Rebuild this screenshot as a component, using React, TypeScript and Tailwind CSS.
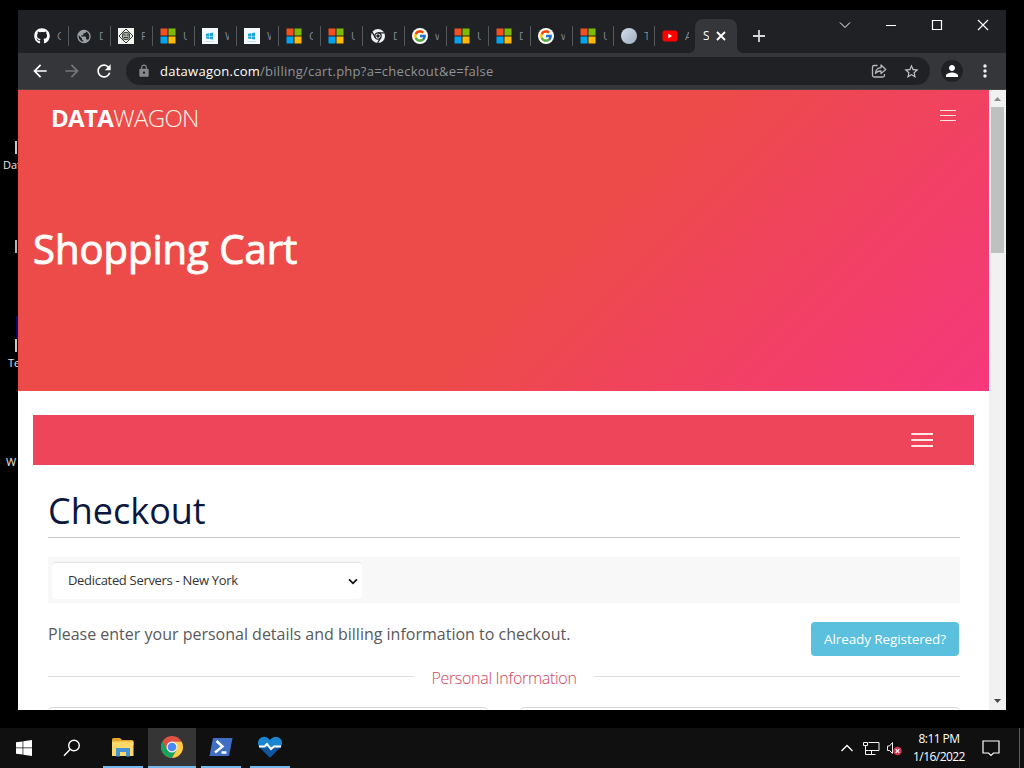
import type { ReactNode } from "react";
import { FaGithub } from "react-icons/fa";
import { FcGoogle } from "react-icons/fc";
import {
  MdArrowBack,
  MdArrowForward,
  MdLock,
  MdMoreVert,
  MdPerson,
  MdPublic,
  MdRefresh,
  MdStarBorder,
} from "react-icons/md";

function MicrosoftIcon() {
  return (
    <svg width="16" height="16" viewBox="0 0 16 16">
      <path fill="#f25022" d="M.5.5h7v7h-7z" />
      <path fill="#7fba00" d="M8.5.5h7v7h-7z" />
      <path fill="#00a4ef" d="M.5 8.5h7v7h-7z" />
      <path fill="#ffb900" d="M8.5 8.5h7v7h-7z" />
    </svg>
  );
}

function WindowsTileIcon() {
  return (
    <svg width="16" height="16" viewBox="0 0 16 16">
      <path fill="#f4fafc" d="M0 0h16v16H0z" />
      <path fill="#18a5d6" d="M4 5.7l3-.4V8H4zM7.5 5.2l3.5-.6V8H7.5zM4 8.4h3v2.5l-3-.4zM7.5 8.4H11v3.1l-3.5-.5z" />
      <path fill="#c3e2ec" d="M3 13h9v1H3z" />
    </svg>
  );
}

function DiamondIcon() {
  return (
    <svg width="16" height="16" viewBox="0 0 16 16" fill="none" stroke="#303a33">
      <path fill="#f1f3ef" stroke="none" d="M0 0h16v16H0z" />
      <path d="M8 1l7 7-7 7-7-7z" />
      <circle cx="8" cy="8" r="3.8" fill="#a9b0a9" />
      <path d="M5.5 7h2M8.8 7h2M6 9.5h4" strokeWidth="1.2" />
    </svg>
  );
}

function ChromeMonoIcon() {
  return (
    <svg width="14" height="14" viewBox="0 0 16 16" fill="none">
      <circle cx="8" cy="8" r="8" fill="#f1f3f4" />
      <g stroke="#202124" strokeWidth="1.4">
        <circle cx="8" cy="8" r="3.6" />
        <path d="M8 4.4h7.4M4.9 9.8L1.3 3.6M11.1 9.8l-3.6 6.2" />
      </g>
      <circle cx="8" cy="8" r="2" fill="#202124" />
    </svg>
  );
}

function GoogleIcon() {
  return (
    <span className="flex size-4 items-center justify-center rounded-full bg-white">
      <FcGoogle size={14} />
    </span>
  );
}

function YoutubeIcon() {
  return (
    <svg width="16" height="16" viewBox="0 0 16 16">
      <rect x="0.5" y="2.5" width="15" height="11" rx="2.5" fill="#f00" />
      <path d="M6.3 5.7v4.6L10.2 8z" fill="#fff" />
    </svg>
  );
}

const tabs: { icon: ReactNode; title: string; width: string }[] = [
  { icon: <FaGithub size={16} color="#fff" />, title: "G", width: "w-[42px]" },
  { icon: <MdPublic size={17} color="#9aa0a6" />, title: "D", width: "w-[42px]" },
  { icon: <DiamondIcon />, title: "F", width: "w-[42px]" },
  { icon: <MicrosoftIcon />, title: "U", width: "w-[42px]" },
  { icon: <WindowsTileIcon />, title: "W", width: "w-[42px]" },
  { icon: <WindowsTileIcon />, title: "W", width: "w-[42px]" },
  { icon: <MicrosoftIcon />, title: "C", width: "w-[42px]" },
  { icon: <MicrosoftIcon />, title: "U", width: "w-[42px]" },
  { icon: <ChromeMonoIcon />, title: "D", width: "w-[42px]" },
  { icon: <GoogleIcon />, title: "w", width: "w-[42px]" },
  { icon: <MicrosoftIcon />, title: "U", width: "w-[42px]" },
  { icon: <MicrosoftIcon />, title: "D", width: "w-[42px]" },
  { icon: <GoogleIcon />, title: "w", width: "w-[42px]" },
  { icon: <MicrosoftIcon />, title: "U", width: "w-[41px]" },
  {
    icon: <span className="size-4 rounded-full bg-linear-to-br from-[#d5deea] to-[#9eadc2]" />,
    title: "T",
    width: "w-[41px]",
  },
  { icon: <YoutubeIcon />, title: "A", width: "w-[40px]" },
];

function TabStrip() {
  return (
    <div className="flex h-[43px] shrink-0 bg-[#202124] pl-[9px]">
      <div className="flex pt-[9px]">
        {tabs.map((tab, i) => (
          <div key={i} className={`flex h-[34px] items-center pl-[7px] ${tab.width}`}>
            <span className="flex size-4 shrink-0 items-center justify-center">{tab.icon}</span>
            <span className="ml-[7px] w-[4px] shrink-0 overflow-hidden text-[11px] text-[#85888c]">{tab.title}</span>
            {i < tabs.length - 1 && <span className="ml-auto h-5 w-px shrink-0 bg-[#55585c]" />}
          </div>
        ))}
        <div className="flex h-[34px] items-end">
          <svg className="-ml-[6px]" width="6" height="6" viewBox="0 0 6 6">
            <path d="M6 0v6H0a6 6 0 0 0 6-6z" fill="#35363a" />
          </svg>
          <div className="flex h-[34px] w-[42px] items-center gap-[7px] rounded-t-lg bg-[#35363a] pl-[8px] text-white">
            <span className="w-[6px] overflow-hidden text-[12px]">S</span>
            <svg width="10" height="10" viewBox="0 0 10 10" stroke="currentColor" strokeWidth="1.8">
              <path d="M1 1l8 8M9 1l-8 8" />
            </svg>
          </div>
          <svg width="6" height="6" viewBox="0 0 6 6">
            <path d="M0 0v6h6a6 6 0 0 1-6-6z" fill="#35363a" />
          </svg>
        </div>
        <svg className="mt-[10px] ml-[10px]" width="12" height="30" viewBox="0 0 12 30" stroke="#d5d7da" strokeWidth="1.8">
          <path d="M0 7h12M6 1v12" />
        </svg>
      </div>
      <div className="ml-auto flex gap-[34px] pt-[9px] pr-[17px] text-white">
        <svg width="12" height="12" viewBox="0 0 12 12" fill="none" stroke="currentColor">
          <path d="M1 3.5l5 5 5-5" />
        </svg>
        <svg width="12" height="12" viewBox="0 0 12 12" fill="none" stroke="currentColor">
          <path d="M1 6.5h10" />
        </svg>
        <svg width="12" height="12" viewBox="0 0 12 12" fill="none" stroke="currentColor" strokeWidth="1.2">
          <path d="M1.5 1.5h9v9h-9z" />
        </svg>
        <svg width="12" height="12" viewBox="0 0 12 12" fill="none" stroke="currentColor" strokeWidth="1.2">
          <path d="M1 1l10 10M11 1L1 11" />
        </svg>
      </div>
    </div>
  );
}

function Toolbar() {
  return (
    <div className="flex h-[37px] shrink-0 items-center border-b border-[#4a4445] bg-[#35363a] pl-[12px]">
      <MdArrowBack size={20} color="#fff" />
      <MdArrowForward className="ml-3" size={20} color="#75777b" />
      <MdRefresh className="ml-3" size={20} color="#fff" />
      <div className="ml-[12px] flex h-7 w-[804px] items-center rounded-full bg-[#202124] pl-[11px] pr-[10px]">
        <MdLock size={14} color="#85888c" />
        <p className="ml-[9px] text-[13px] leading-none tracking-[0.26px] whitespace-nowrap text-[#909398]">
          <span className="text-white">datawagon.com</span>/billing/cart.php?a=checkout&amp;e=false
        </p>
        <svg className="ml-auto" width="16" height="16" viewBox="0 0 16 16" fill="none" stroke="#b5b7ba" strokeWidth="1.3">
          <path d="M6.5 2.5H3.2A1.7 1.7 0 0 0 1.5 4.2v8.1A1.7 1.7 0 0 0 3.2 14h8.6a1.7 1.7 0 0 0 1.7-1.7V11" />
          <path strokeLinejoin="round" d="M4.5 10.2c.4-3.6 2.3-5.3 5.5-5.5V2l4.8 4.4L10 10.6V8C7.700 7.900 6 8.500 4.500 10.200z" />
        </svg>
        <MdStarBorder className="ml-4" size={17} color="#c5c7ca" />
      </div>
      <span className="ml-[11px] flex size-[22px] items-center justify-center rounded-full bg-[#202124]">
        <MdPerson size={18} color="#fff" />
      </span>
      <MdMoreVert className="ml-[12px]" size={20} color="#f1f1f1" />
    </div>
  );
}

function Hero() {
  return (
    <header className="h-[301px] shrink-0 bg-[linear-gradient(135deg,#ed4a4a_0%,#ed4a4a_56%,#f5387c_100%)] text-white">
      <div className="flex items-start justify-between pt-[11px] pr-[33px] pl-[33px]">
        <div className="text-[24px] leading-[34px] font-light tracking-[-0.65px] text-[#fff3e6]">
          <span className="font-bold text-white">DATA</span>WAGON
        </div>
        <svg className="mt-[8px]" width="16" height="14" viewBox="0 0 16 14" stroke="#ffe5df">
          <path d="M0 1.500h16M0 6.500h16M0 11.500h16" />
        </svg>
      </div>
      <h1 className="mt-[84px] pl-[15px] text-[40px] leading-[60px] [-webkit-text-stroke:1px_#fffaf2]">Shopping Cart</h1>
    </header>
  );
}

function Checkout() {
  return (
    <main className="flex flex-col px-[15px] pt-6">
      <div className="flex h-[50px] items-center justify-end bg-[#ee455b] pr-[41px]">
        <svg width="22" height="14" viewBox="0 0 22 14" stroke="#ffe9e4" strokeWidth="2">
          <path d="M0 1h22M0 7h22M0 13h22" />
        </svg>
      </div>
      <div className="flex flex-col pr-[14px] pl-[15px]">
        <h2 className="h-[73px] border-b border-[#c9c9cb] pt-[21px] text-[36px] leading-[50px] text-[#0b173f]">Checkout</h2>
        <div className="mt-[19px] h-[46px] bg-[#f8f8f8] pt-[5px] pl-1">
          <div className="flex h-[37px] w-[310px] items-center justify-between rounded border-t border-[#e4e4e4] bg-white pr-[4px] pl-4 text-[13px] text-[#333]">
            <span className="tracking-[-0.31px]">Dedicated Servers - New York</span>
            <svg width="10" height="7" viewBox="0 0 11 8" fill="none" stroke="#111" strokeWidth="2">
              <path d="M1 1.500l4.500 4.500L10 1.500" />
            </svg>
          </div>
        </div>
        <div className="mt-[19px] flex items-start justify-between">
          <p className="text-[16px] leading-6 whitespace-nowrap text-[#58595b]">
            Please enter your personal details and billing information to checkout.
          </p>
          <button className="mr-px h-[34px] w-[148px] rounded bg-[#5bc0de] text-[13.5px] tracking-[-0.1px] whitespace-nowrap text-white">
            Already Registered?
          </button>
        </div>
        <div className="mt-[8px] flex h-6 items-center text-[16px] text-[#d0425e]">
          <span className="h-px flex-1 bg-[#dedede]" />
          <span className="mx-[17px] mt-[3px] font-light tracking-[-0.3px] whitespace-nowrap">Personal Information</span>
          <span className="h-px flex-1 bg-[#dedede]" />
        </div>
        <div className="mt-[19px] flex gap-8">
          <div className="h-9 flex-1 rounded border border-[#d8d8d8]" />
          <div className="h-9 flex-1 rounded border border-[#d8d8d8]" />
        </div>
      </div>
    </main>
  );
}

function Scrollbar() {
  return (
    <div className="flex w-[17px] shrink-0 flex-col items-center bg-[#f1f1f1]">
      <svg width="17" height="17" viewBox="0 0 17 17">
        <path d="M5 11h7L8.500 7z" fill="#8b8b8b" />
      </svg>
      <div className="h-[146px] w-[13px] bg-[#bfc0c0]" />
      <svg className="mt-auto" width="17" height="17" viewBox="0 0 17 17">
        <path d="M5 6h7l-3.500 4z" fill="#484848" />
      </svg>
    </div>
  );
}

function Desktop() {
  return (
    <div className="h-[700px] w-[18px] shrink-0 overflow-hidden text-[11px] leading-4 whitespace-nowrap text-[#e8e8e8]">
      <div className="mt-[131px] ml-[15px] h-[13px] w-[2px] bg-[#c9c9c9]" />
      <div className="mt-[3px] pl-[3px]">Data</div>
      <div className="mt-[67px] ml-[15px] h-[13px] w-[2px] bg-[#b5b5b5]" />
      <div className="mt-[63px] ml-[16px] h-[22px] w-[2px] bg-[#09096a]" />
      <div className="mt-[1px] ml-[15px] h-[13px] w-[2px] bg-[#c9c9c9]" />
      <div className="mt-[3px] pl-[8px]">Temp</div>
      <div className="mt-[83px] pl-[6px]">W</div>
    </div>
  );
}

function ExplorerIcon() {
  return (
    <svg width="22" height="20" viewBox="0 0 22 20">
      <path fill="#e5a82c" d="M0 2.500Q0 1 1.500 1H8l2 2h10q1.500 0 1.500 1.500V8H0z" />
      <path fill="#ffd86b" d="M0 4.500h21.500V19H0z" />
      <path fill="#4594d2" d="M4 11h14v8.500h-4V15H8v4.500H4z" />
    </svg>
  );
}

function ChromeIcon() {
  return (
    <svg width="24" height="24" viewBox="0 0 24 24">
      <circle cx="12" cy="12" r="11" fill="#de5246" />
      <path fill="#1aa260" d="M2.500 6.500A11 11 0 0 0 12 23l4.800-8.300L12 12l-4.800 2.700z" />
      <path fill="#ffce44" d="M12 23A11 11 0 0 0 21.600 6.700H12l4.800 8z" />
      <circle cx="12" cy="12" r="5.500" fill="#f4f4f4" />
      <circle cx="12" cy="12" r="4.300" fill="#4a8af4" />
    </svg>
  );
}

function PowershellIcon() {
  return (
    <svg width="24" height="20" viewBox="0 0 24 20" fill="none">
      <path fill="#3f6fc4" d="M4 1h19.500L20 19H.5z" />
      <path stroke="#fff" strokeWidth="2.400" d="M7.500 4l6 5.500-7.500 6M12.500 15.500h5" />
    </svg>
  );
}

function HeartIcon() {
  return (
    <svg width="24" height="22" viewBox="0 0 24 22" fill="none">
      <path fill="#1b86d0" d="M12 21.500L1.800 11.300A6.200 6.200 0 0 1 10.600 2.500L12 4l1.400-1.500a6.200 6.200 0 0 1 8.800 8.800z" />
      <path fill="#0d559d" d="M1.500 11.500h20.700L12 21.500z" />
      <path stroke="#fff" strokeWidth="2" d="M1 10.500h5.500L9 8l4 5 3-2.500h7" />
    </svg>
  );
}

const pinned = [
  { icon: <ExplorerIcon />, cell: "ml-[7px] w-10" },
  { icon: <ChromeIcon />, cell: "ml-[5px] w-12 bg-[#353535]" },
  { icon: <PowershellIcon />, cell: "ml-[5px] w-10" },
  { icon: <HeartIcon />, cell: "ml-[9px] w-10" },
];

function Taskbar() {
  return (
    <footer className="mt-[18px] flex h-10 bg-[#101010] text-white">
      <div className="flex w-12 items-center justify-center">
        <svg width="16" height="16" viewBox="0 0 16 16" fill="#fff">
          <path d="M0 2.300l6.600-.9v6.200H0zM7.300 1.300L16 0v7.600H7.300zM0 8.300h6.600v6.300L0 13.700zM7.300 8.300H16V16l-8.700-1.300z" />
        </svg>
      </div>
      <div className="flex w-12 items-center justify-center">
        <svg width="18" height="18" viewBox="0 0 18 18" fill="none" stroke="#fff" strokeWidth="1.400">
          <circle cx="11" cy="6.500" r="5.300" />
          <path d="M7.200 10.300L1 16.700" />
        </svg>
      </div>
      {pinned.map((app, i) => (
        <div key={i} className={`flex flex-col ${app.cell}`}>
          <div className="flex flex-1 items-center justify-center">{app.icon}</div>
          <div className="h-[2px] bg-[#76b9ed]" />
        </div>
      ))}
      <div className="ml-auto flex items-center">
        <svg width="12" height="8" viewBox="0 0 12 8" fill="none" stroke="#fff" strokeWidth="1.300">
          <path d="M.5 7L6 1.500 11.500 7" />
        </svg>
        <svg className="ml-[10px]" width="17" height="15" viewBox="0 0 17 15" fill="none" stroke="#f4f4f4">
          <path d="M5.500 1.500h10.500v8H5.500M.5 1.500h4v3h-4zM2.500 4.500v9M2.500 9.500h3M8.500 9.500v4M2.500 13.500h10" />
        </svg>
        <svg className="ml-[6px]" width="17" height="15" viewBox="0 0 17 15" fill="none">
          <path stroke="#eee" d="M1.500 5h2l3-3.500v11L3.500 9.500h-2z" />
          <circle cx="11.500" cy="10" r="4.300" fill="#cf3349" />
          <path stroke="#fff" strokeWidth="1.200" d="M9.700 8.200l3.600 3.600M13.300 8.200l-3.600 3.600" />
        </svg>
        <div className="ml-[7px] w-[58px] text-center text-[12px] leading-[18px] tracking-[-0.55px] whitespace-nowrap">
          <div>8:11 PM</div>
          <div>1/16/2022</div>
        </div>
        <svg className="ml-[14px]" width="18" height="18" viewBox="0 0 18 18" fill="none" stroke="#fff" strokeWidth="1.200">
          <path d="M1 2h16v12h-5.500L9 16.500 6.500 14H1z" />
        </svg>
        <div className="ml-[19px] mr-[4px] h-10 w-px bg-[#5c5c5c]" />
      </div>
    </footer>
  );
}

export default function App() {
  return (
    <div className="h-[768px] w-[1024px] overflow-hidden bg-black pt-[10px] font-['Open_Sans',sans-serif]">
      <div className="flex">
        <Desktop />
        {/* Browser window */}
        <div className="flex h-[700px] w-[988px] flex-col overflow-hidden">
          <TabStrip />
          <Toolbar />
          <div className="flex min-h-0 flex-1 bg-white">
            <div className="flex w-[971px] flex-col overflow-hidden">
              <Hero />
              <Checkout />
            </div>
            <Scrollbar />
          </div>
        </div>
      </div>
      <Taskbar />
    </div>
  );
}
